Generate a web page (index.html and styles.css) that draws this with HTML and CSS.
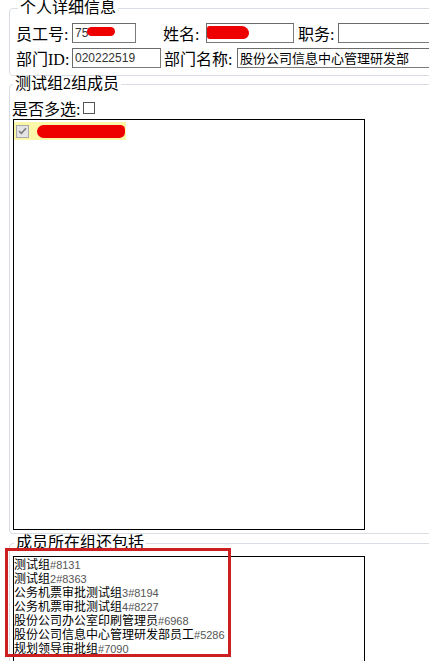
FILE: index.html
```html
<!DOCTYPE html>
<html lang="zh-CN">
<head>
<meta charset="utf-8">
<title>个人详细信息</title>
<link rel="stylesheet" href="styles.css">
</head>
<body>
<div class="page">
  <fieldset class="box detail">
    <legend>个人详细信息</legend>
    <div class="row">
      <label class="lbl w-empno">员工号:</label>
      <span class="field f-empno"><input class="inp" type="text" value="75"><span class="blot blot-empno"></span></span>
      <label class="lbl w-name">姓名:</label>
      <span class="field f-name"><input class="inp" type="text" value=""><span class="blot blot-name"></span></span>
      <label class="lbl w-job">职务:</label>
      <span class="field f-job"><input class="inp" type="text" value=""></span>
    </div>
    <div class="row">
      <label class="lbl w-dept">部门ID:</label>
      <span class="field f-dept"><input class="inp" type="text" value="020222519"></span>
      <label class="lbl w-deptname">部门名称:</label>
      <span class="field f-deptname"><input class="inp cjk" type="text" value="股份公司信息中心管理研发部"></span>
    </div>
  </fieldset>

  <fieldset class="box members">
    <legend>测试组2组成员</legend>
    <div class="multi"><span>是否多选:</span><span class="cb"></span></div>
    <div class="list list-main">
      <div class="item">
        <span class="cb cb-checked"><svg width="9" height="8" viewBox="0 0 9 8"><path d="M1 4.2 L3.4 6.4 L8 1.2" fill="none" stroke="#7d7d7d" stroke-width="1.6"/></svg></span>
        <span class="item-name"><span class="blot blot-item"></span></span>
      </div>
    </div>
  </fieldset>

  <fieldset class="box groups">
    <legend>成员所在组还包括</legend>
    <div class="list list-groups">
      <div class="gline">测试组<span class="num">#8131</span></div>
      <div class="gline">测试组<span class="num">2#8363</span></div>
      <div class="gline">公务机票审批测试组<span class="num">3#8194</span></div>
      <div class="gline">公务机票审批测试组<span class="num">4#8227</span></div>
      <div class="gline">股份公司办公室印刷管理员<span class="num">#6968</span></div>
      <div class="gline">股份公司信息中心管理研发部员工<span class="num">#5286</span></div>
      <div class="gline">规划领导审批组<span class="num">#7090</span></div>
    </div>
  </fieldset>
  <div class="annot"></div>
</div>
</body>
</html>
```

FILE: styles.css
```css
html, body {
  margin: 0;
  padding: 0;
  background: #fff;
  overflow: hidden;
}
body {
  width: 429px;
  height: 661px;
  font-family: "Liberation Serif", "Noto Sans CJK SC", serif;
  color: #000;
}
.page {
  position: relative;
  width: 600px;
  padding-left: 9px;
}
.box {
  margin: 0;
  border: 1px solid #d9dee4;
  border-radius: 4px;
  min-width: 0;
}
legend {
  font-size: 16px;
  line-height: 16px;
  padding: 0 2px;
  margin-left: 2px;
}
.detail {
  padding: 4px 4px 5px 6px;
}
.row {
  display: flex;
  align-items: center;
  height: 25px;
  font-size: 16px;
}
.lbl {
  white-space: nowrap;
}
.w-empno { width: 56px; }
.w-name { width: 43px; margin-left: 27px; }
.w-job { width: 40px; margin-left: 4px; }
.w-dept { width: 56px; }
.w-deptname { width: 73px; margin-left: 3px; }
.field {
  position: relative;
  display: block;
  height: 20px;
}
.f-empno { width: 64px; }
.f-name { width: 88px; }
.f-job { width: 120px; }
.f-dept { width: 89px; }
.f-deptname { width: 220px; }
.inp {
  box-sizing: border-box;
  width: 100%;
  height: 20px;
  margin: 0;
  padding: 0 2px;
  border: 1px solid #7a7a7a;
  border-top-color: #6b6b6b;
  border-left-color: #6b6b6b;
  font: 12px "Liberation Sans", "Noto Sans CJK SC", sans-serif;
  color: #333;
  background: #fff;
  outline: none;
}
.inp.cjk {
  font-size: 13px;
  color: #000;
}
.blot {
  position: absolute;
  background: #ee0000;
  border-radius: 8px;
}
.blot-empno {
  left: 15px;
  top: 4px;
  width: 28px;
  height: 9px;
  border-radius: 5px;
}
.blot-name {
  left: 1px;
  top: 3px;
  width: 42px;
  height: 13px;
  border-radius: 3px 9px 7px 3px;
}
.members {
  padding: 0 3px 3px 2px;
}
.members legend {
  margin-left: 1px;
}
.multi {
  display: flex;
  align-items: center;
  height: 18px;
  margin-top: 7px;
  font-size: 16px;
}
.multi .cb {
  margin-left: 3px;
}
.cb {
  display: inline-block;
  box-sizing: border-box;
  width: 12px;
  height: 12px;
  border: 1px solid #555;
  background: #fff;
}
.list {
  box-sizing: border-box;
  width: 352px;
  margin-left: 1px;
  border: 1px solid #000;
  background: #fff;
}
.list-main {
  height: 411px;
  margin-top: 2px;
  padding: 2px 0 0 0;
}
.item {
  display: flex;
  align-items: center;
  width: 112px;
  height: 18px;
  background: #fbf7a8;
}
.cb-checked {
  width: 13px;
  height: 13px;
  margin-left: 2px;
  border: 1px solid #a8a8a8;
  background: #e4e4e4;
  display: flex;
  align-items: center;
  justify-content: center;
}
.item-name {
  position: relative;
  display: block;
  width: 88px;
  height: 16px;
  margin-left: 8px;
}
.blot-item {
  left: 0;
  top: 2px;
  width: 88px;
  height: 13px;
  border-radius: 7px 5px 6px 7px;
}
.groups {
  padding: 0 3px 0 2px;
  margin-top: 1px;
}
.list-groups {
  height: 120px;
  margin-top: 5px;
  padding: 0;
  font-family: "Noto Sans CJK SC", sans-serif;
  font-size: 12px;
}
.gline {
  height: 14px;
  line-height: 14px;
  white-space: nowrap;
}
.num {
  font-family: "Liberation Sans", sans-serif;
  font-size: 11px;
  color: #555;
}
.annot {
  position: absolute;
  left: 5px;
  top: 548px;
  width: 220px;
  height: 103px;
  border: 3px solid #cc1f22;
}
```
